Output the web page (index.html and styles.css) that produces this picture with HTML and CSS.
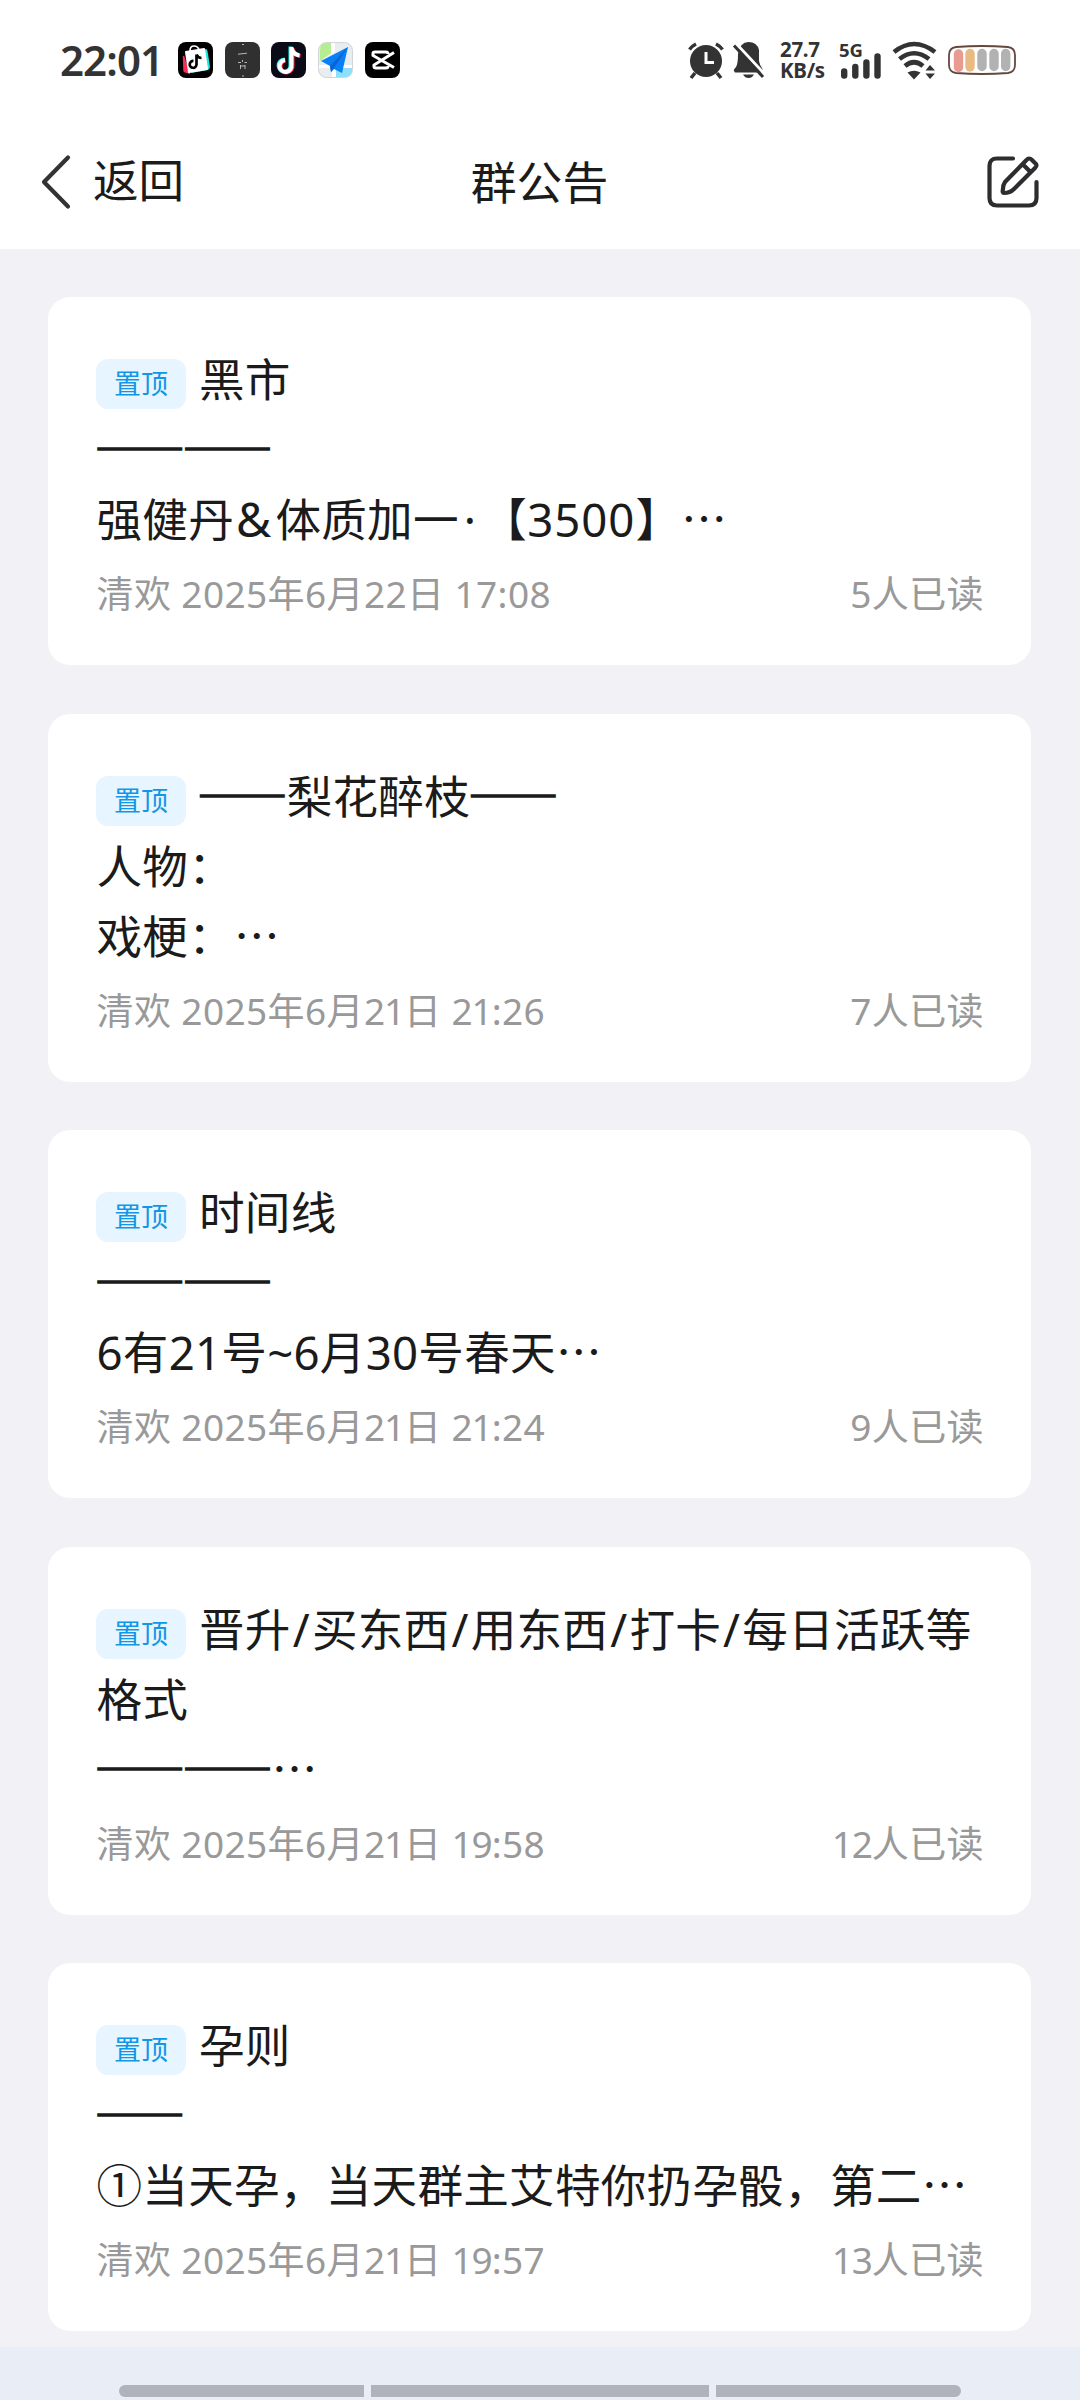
FILE: index.html
```html
<!DOCTYPE html>
<html lang="zh-CN">
<head>
<meta charset="utf-8">
<title>群公告</title>
<link rel="stylesheet" href="styles.css">
</head>
<body>
<header class="top">
  <div class="status">
    <span class="clock">22:01</span>
    <div class="apps">
      <svg class="app" viewBox="0 0 35 36"><rect width="35" height="36" rx="8"/><path d="M5.500 14L11 31L8 30Q6 30 6 28Z" fill="#fe2c55" stroke="#fe2c55" stroke-width="1.500"/><path d="M26 8L28 7Q29 7 29.500 9L32 25Q32 27 30 28L13 31Z" fill="#20e5df"/><path d="M8 10L26 7L29 27L11 30Z" fill="#fff" stroke="#fff" stroke-width="2" stroke-linejoin="round"/><path d="M12 9Q12 4 16 4Q20 4 21 8" fill="none" stroke="#fff" stroke-width="1.700"/><path d="M18.500 12.500V22.500A3.400 3.400 0 1 1 15.500 19M18.500 12.500Q20 16 23.500 16" fill="none" stroke="#000" stroke-width="2.700"/></svg>
      <svg class="app" viewBox="0 0 35 36"><rect width="35" height="36" rx="8" fill="#303030"/><path d="M17 2.500H19M13 12.200L22 11.200M17.500 18V20M13 20.500H16M19.500 20.500H22M15.500 23V27M20 23V27M15.500 24H20M17 34H19" stroke="#d8d8d8" stroke-width=".8" fill="none"/></svg>
      <svg class="app" viewBox="0 0 35 36"><rect width="35" height="36" rx="8" fill="#0b0b18"/><g fill="none" stroke-width="4"><path d="M19.500 4.500V22.500A6 6 0 1 1 13.500 17.500M19.500 5Q21 12 28 13" stroke="#25f4ee"/><path d="M21.500 6V23.500A6 6 0 1 1 14.500 18.500M21.500 6.500Q23 13 29.500 14" stroke="#fe2c55"/><path d="M20.500 5V23A6 6 0 1 1 14 18M20.500 6Q22 12.500 28.500 13.500" stroke="#fff"/></g></svg>
      <svg class="app" viewBox="0 0 35 36"><rect x=".5" y=".5" width="34" height="35" rx="8" fill="#e9edf0" stroke="#cfd5d8"/><path d="M8 1H13V11L2 19V8Q2 1 8 1Z" fill="#b7ed91"/><path d="M13 1H17V10L13 13ZM1 23H34V26H1ZM14 25H18V35H14Z" fill="#fff"/><path d="M18 26H34V28Q34 35 27 35H18Z" fill="#8de0fc"/><path d="M30 5L3 19L12 24L13 30L16 27L24 31Z" fill="#087ff5"/><path d="M30 5L12 24L13 30L16 26Z" fill="#0864d2"/></svg>
      <svg class="app" viewBox="0 0 35 36"><rect width="35" height="36" rx="8"/><path d="M29 10.500L9 23V24.500Q9 26 11 26H21Q23 26 23 24M29 25.500L8 13.500V11.500Q8 10 10 10H21Q23 10 23 12" fill="none" stroke="#fff" stroke-width="3"/></svg>
    </div>
    <div class="signals">
      <svg class="alarm" viewBox="0 0 36 36"><circle cx="18" cy="19" r="16" fill="#333"/><path d="M1.500 7.500Q4 4 8 2M28 2Q32 4 34.500 7.500M7 31L3 36M29 31L33 36" stroke="#333" stroke-width="3.500" fill="none"/><path d="M18 10V20.500H26" stroke="#fff" stroke-width="3" fill="none"/></svg>
      <svg class="bell" viewBox="0 0 31 36"><path d="M1 29Q0 28 3 25Q5 22 5 12Q7 0 15.500 0Q24 0 26 8V19Q27 24 29 26Q31 30 28 30.500H2Z" fill="#333"/><path d="M10 32.500H21Q19 36 15.500 36Q12 36 10 32.500Z" fill="#333"/><path d="M3 1.500L32 32.500" stroke="#fff" stroke-width="3"/><path d="M1 3.500L30 35" stroke="#333" stroke-width="3"/></svg>
      <div class="speed"><span>27.7</span><span>KB/s</span></div>
      <div class="cell"><span class="gen">5G</span>
        <svg class="bars" viewBox="0 0 40 26"><path d="M3.200 18.500V22.500M14.300 14V22.500M25.400 9.500V22.500M36.500 3.500V22.500" stroke="#333" stroke-width="6.400" stroke-linecap="round"/></svg></div>
      <svg class="wifi" viewBox="0 0 45 37"><path d="M2 10Q22 -6 43 10M7.500 17Q22 5.500 37 17M13 24Q22 16.500 31 24" fill="none" stroke="#333" stroke-width="4.600"/><path d="M15.500 30.500Q22 27 28.500 30.500L22 37.500ZM33.500 28.500L38 23L43 28.500ZM33.500 31.500H43L38 37Z" fill="#333"/></svg>
      <svg class="battery" viewBox="0 0 68 30"><path d="M8 2Q34 0 60 2Q67 3 67 10V20Q67 27 60 28Q34 30 8 28Q1 27 1 20V10Q1 3 8 2Z" fill="#fff" stroke="#63483f" stroke-width="1.800"/><g stroke-width="9.400" stroke-linecap="round"><path d="M10.500 9V22.500" stroke="#e99a91"/><path d="M22 8.500V22" stroke="#e9bb83"/><path d="M34 8.500V21.500M46 8.500V21.500M57.700 8.500V21.500" stroke="#b2b2b2"/></g></svg>
    </div>
  </div>
  <nav class="nav">
    <div class="back"><svg class="chevron" viewBox="0 0 32 56"><path d="M28 3.500L4 28L28 52.500" fill="none" stroke="#333" stroke-width="4.200" stroke-linecap="round" stroke-linejoin="round"/></svg><span>返回</span></div>
    <h1 class="title">群公告</h1>
    <svg class="edit" viewBox="0 0 52 52"><g fill="none" stroke="#2d2d2f" stroke-width="4.200" stroke-linecap="round" stroke-linejoin="round"><path d="M26 2.500H10Q2.500 2.500 2.500 10V42Q2.500 49.500 10 49.500H42Q49.500 49.500 49.500 42V26"/><path d="M18 26L39.500 4Q42 1 45 4L48 7Q51 9 48 12L27 33Q23 37 17 37Q15 37 16 33Q16 29 18 26ZM36 8.500L43.500 16"/></g></svg>
  </nav>
</header>
<main class="list">
  <article class="card">
    <div class="body"><span class="pin">置顶</span>黑市<br><span class="rule">——</span><span class="rule">——</span><br>强健丹<span class="amp">&amp;</span>体质加一<span class="dot">·</span>【<span class="num">3500</span>】<span class="more">…</span></div>
    <div class="meta"><span>清欢 2025年6月22日 17:08</span><span>5人已读</span></div>
  </article>
  <article class="card">
    <div class="body"><span class="pin">置顶</span><span class="rule">——</span>梨花醉枝<span class="rule">——</span><br>人物：<br>戏梗：<span class="more">…</span></div>
    <div class="meta"><span>清欢 2025年6月<span class="one">21</span>日 <span class="one">21</span>:26</span><span>7人已读</span></div>
  </article>
  <article class="card">
    <div class="body"><span class="pin">置顶</span>时间线<br><span class="rule">——</span><span class="rule">——</span><br>6有21号~6月30号春天<span class="more">…</span></div>
    <div class="meta"><span>清欢 2025年6月<span class="one">21</span>日 <span class="one">21</span>:24</span><span>9人已读</span></div>
  </article>
  <article class="card">
    <div class="body"><span class="pin">置顶</span>晋升<span class="slash">/</span>买东西<span class="slash">/</span>用东西<span class="slash">/</span>打卡<span class="slash">/</span>每日活跃等格式<br><span class="rule">——</span><span class="rule">——</span><span class="more">…</span></div>
    <div class="meta"><span>清欢 2025年6月<span class="one">21</span>日 <span class="one">19</span>:58</span><span><span class="one">12</span>人已读</span></div>
  </article>
  <article class="card">
    <div class="body"><span class="pin">置顶</span>孕则<br><span class="rule">——</span><br>①当天孕，当天群主艾特你扔孕骰，第二<span class="more">…</span></div>
    <div class="meta"><span>清欢 2025年6月<span class="one">21</span>日 <span class="one">19</span>:57</span><span><span class="one">13</span>人已读</span></div>
  </article>
</main>
<footer class="gesture"><i class="side"></i><i class="mid"></i><i class="side end"></i></footer>
</body>
</html>
```
FILE: styles.css
```css
* { box-sizing: border-box; }
body {
  margin: 0;
  width: 1080px;
  height: 2400px;
  overflow: hidden;
  display: flex;
  flex-direction: column;
  background: #f2f1f6;
  color: #1b1b1b;
  font-family: "Noto Sans", "Noto Sans CJK SC", sans-serif;
  text-spacing-trim: space-all;
}
svg { display: block; flex: none; overflow: visible; }
.top { height: 249px; background: #fff; flex: none; }
.status { height: 120px; padding: 0 64px 0 60px; display: flex; align-items: center; color: #333; }
.clock { width: 118px; font-size: 42px; font-weight: 600; letter-spacing: -.9px; line-height: 60px; }
.apps { display: flex; gap: 11.700px; }
.app { width: 35px; height: 36px; }
.signals { margin-left: auto; display: flex; align-items: center; }
.alarm { width: 36px; height: 36px; margin-right: 9px; }
.bell { width: 31px; height: 36px; margin-right: 16px; }
.speed { width: 59px; display: flex; flex-direction: column; font-size: 20.500px; font-weight: 700; line-height: 21.500px; letter-spacing: -.3px; }
.cell { width: 53px; height: 37px; display: grid; }
.gen { grid-area: 1 / 1; font-size: 18.500px; font-weight: 700; line-height: 15px; }
.bars { grid-area: 1 / 1; align-self: end; margin-left: 2px; width: 40px; height: 26px; }
.wifi { width: 45px; height: 37px; margin-right: 11px; }
.battery { width: 68px; height: 30px; }
.nav { height: 123px; padding: 0 41px 0 40px; display: grid; grid-template-columns: 1fr auto 1fr; align-items: center; font-size: 45.600px; }
.back { display: flex; align-items: center; gap: 21px; }
.back span { line-height: 60px; padding-bottom: 4px; }
.chevron { width: 32px; height: 56px; }
.title { margin: 0; font-size: 45.800px; font-weight: 400; line-height: 60px; }
.edit { width: 52px; height: 52px; justify-self: end; }
.list { flex: none; height: 2098px; overflow: hidden; padding: 48px 49px 0 48px; display: flex; flex-direction: column; gap: 48.500px; }
.card { flex: none; height: 368px; padding: 47px 47px 47px 48.500px; border-radius: 22px; background: #fff; }
.body { font-size: 45.600px; line-height: 70px; height: 210px; letter-spacing: .25px; }
.pin {
  display: inline-block;
  width: 90px;
  height: 50px;
  margin: 15px 13px 0 -.5px;
  border-radius: 12px;
  background: #e6f5ff;
  color: #1296e8;
  font-size: 27px;
  letter-spacing: 0;
  line-height: 49px;
  text-align: center;
  vertical-align: top;
}
.rule {
  font-family: "Noto Sans CJK SC", sans-serif;
  font-size: 45px;
  line-height: 0;
  letter-spacing: 0;
  margin: 0 -.7px 0 -1.700px;
  -webkit-text-stroke: 1.600px currentColor;
}
.more { font-family: "Noto Sans CJK SC", sans-serif; line-height: 0; }
.amp { font-size: 48px; line-height: 0; margin: 0 4px 0 2px; }
.dot { margin: 0 5px; }
.num { letter-spacing: 1px; }
.slash { margin: 0 2px; }
.one { letter-spacing: -1.100px; }
.meta { margin-top: 17px; display: flex; justify-content: space-between; font-size: 37px; line-height: 45px; letter-spacing: .4px; color: #999; }
.gesture { flex: 1; background: #e9edf6; padding: 38px 119px 0; display: flex; gap: 7px; }
.side, .mid { height: 12px; background: #b0b3ba; }
.side { width: 245px; border-radius: 6px 0 0 6px; }
.mid { width: 338px; }
.end { border-radius: 0 6px 6px 0; }
```
